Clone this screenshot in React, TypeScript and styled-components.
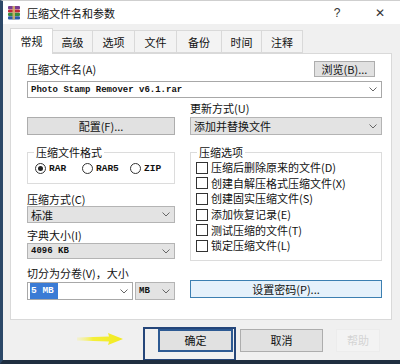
import React from "react";
import styled, { createGlobalStyle } from "styled-components";

const Global = createGlobalStyle`
  html, body { margin: 0; padding: 0; background: #ffffff; }
  body { font-family: "Noto Sans CJK SC", "Noto Sans", sans-serif; }
  * { box-sizing: border-box; }
`;

const cjk = `"Noto Sans CJK SC", "Noto Sans", sans-serif`;
const mono = `"Liberation Mono", "DejaVu Sans Mono", monospace`;

const Window = styled.div`
  width: 400px;
  height: 364px;
  overflow: hidden;
  display: flex;
  flex-direction: column;
  background: #f0f0f0;
  border-left: 3px solid #2c4868;
  border-bottom: 4px solid #1f2e40;
  border-top: 1px solid #cfcfcf;
  font-family: ${cjk};
  font-size: 11px;
  color: #111;
`;

const TitleBar = styled.div`
  height: 23px;
  flex: none;
  background: #ffffff;
  display: flex;
  align-items: center;
  padding-left: 4px;
`;

const Title = styled.span`
  margin-left: 6px;
  font-size: 11px;
  line-height: 14px;
  color: #111;
`;

const TitleButton = styled.span<{ $w: number }>`
  width: ${(p) => p.$w}px;
  height: 23px;
  display: flex;
  align-items: center;
  justify-content: center;
  font-family: "Liberation Sans", sans-serif;
  font-size: 12px;
  color: #333;
`;

const TitleSpacer = styled.div`
  flex: 1;
`;

const Body = styled.div`
  padding: 0 8px 0 7px;
  flex: none;
`;

const TabsRow = styled.div`
  margin-top: 4px;
  height: 25px;
  display: flex;
  align-items: flex-end;
  position: relative;
  z-index: 1;
`;

const Tab = styled.div<{ $w: number; $active?: boolean }>`
  width: ${(p) => p.$w}px;
  height: ${(p) => (p.$active ? 26 : 23)}px;
  margin-bottom: ${(p) => (p.$active ? -1 : 0)}px;
  background: ${(p) => (p.$active ? "#ffffff" : "#f3f3f3")};
  border: 1px solid #d9d9d9;
  border-bottom: ${(p) => (p.$active ? "none" : "1px solid #d9d9d9")};
  border-left: ${(p) => (p.$active ? "1px solid #d9d9d9" : "none")};
  display: flex;
  align-items: center;
  justify-content: center;
  font-size: 11px;
  line-height: 14px;
  padding-bottom: ${(p) => (p.$active ? 2 : 0)}px;
`;

const Panel = styled.div`
  height: 267px;
  background: #ffffff;
  border: 1px solid #d9d9d9;
  padding: 7px 9px 0 16px;
  display: flex;
  flex-direction: column;
`;

const HeaderRow = styled.div`
  height: 16px;
  display: flex;
  align-items: center;
  justify-content: space-between;
`;

const Label = styled.div<{ $mt?: number }>`
  font-size: 11px;
  line-height: 13px;
  height: 13px;
  margin-top: ${(p) => p.$mt ?? 0}px;
  white-space: nowrap;
`;

const Button = styled.div<{ $w?: number; $h: number; $mr?: number }>`
  width: ${(p) => (p.$w ? `${p.$w}px` : "auto")};
  height: ${(p) => p.$h}px;
  margin-right: ${(p) => p.$mr ?? 0}px;
  background: #e1e1e1;
  border: 1px solid #adadad;
  display: flex;
  align-items: center;
  justify-content: center;
  font-size: 11px;
  line-height: 13px;
  white-space: nowrap;
`;

const PasswordButton = styled(Button)`
  margin-top: 19px;
  background: #e5f1fb;
  border: 1px solid #3c7fb1;
`;

const Combo = styled.div<{ $h: number; $mt?: number; $gray?: boolean; $w?: number }>`
  height: ${(p) => p.$h}px;
  width: ${(p) => (p.$w ? `${p.$w}px` : "auto")};
  margin-top: ${(p) => p.$mt ?? 0}px;
  background: ${(p) => (p.$gray ? "#e3e3e3" : "#ffffff")};
  border: 1px solid ${(p) => (p.$gray ? "#b4b4b4" : "#a8a8a8")};
  display: flex;
  align-items: center;
  padding: 0 4px 0 3px;
  font-size: 11px;
  line-height: 14px;
  white-space: nowrap;
`;

const ComboText = styled.span<{ $mono?: boolean }>`
  flex: 1;
  font-family: ${(p) => (p.$mono ? mono : cjk)};
  font-size: ${(p) => (p.$mono ? "9px" : "11px")};
  font-weight: ${(p) => (p.$mono ? 700 : 400)};
  line-height: 14px;
`;

const Selected = styled.span`
  background: #3a7bd5;
  color: #ffffff;
  font-family: ${mono};
  font-size: 9.5px;
  font-weight: 700;
  padding: 1px 4px 1px 1px;
  margin-left: -1px;
`;

const InputSpacer = styled.span`
  flex: 1;
`;

const TwoCols = styled.div<{ $mt: number }>`
  margin-top: ${(p) => p.$mt}px;
  display: grid;
  grid-template-columns: 148px 192px;
  column-gap: 15px;
`;

const Col = styled.div`
  display: flex;
  flex-direction: column;
`;

const ConfigButton = styled(Button)`
  align-self: end;
`;

const Group = styled.fieldset<{ $h: number }>`
  margin: 0;
  height: ${(p) => p.$h}px;
  border: 1px solid #dcdcdc;
  padding: 0 4px 0 6px;
`;

const Legend = styled.legend`
  padding: 0 2px;
  margin-left: 0;
  font-size: 11px;
  line-height: 13px;
`;

const RadioRow = styled.div`
  display: flex;
  align-items: center;
  height: 15px;
  margin-top: 2px;
  padding-left: 1px;
`;

const RadioItem = styled.div<{ $w: number }>`
  width: ${(p) => p.$w}px;
  display: flex;
  align-items: center;
  gap: 3px;
`;

const RadioCircle = styled.span<{ $on?: boolean }>`
  width: 11px;
  height: 11px;
  border-radius: 50%;
  border: 1px solid #333;
  background: #fff;
  display: flex;
  align-items: center;
  justify-content: center;
  &::after {
    content: "";
    width: 5px;
    height: 5px;
    border-radius: 50%;
    background: ${(p) => (p.$on ? "#222" : "transparent")};
  }
`;

const MonoText = styled.span`
  font-family: ${mono};
  font-size: 9.5px;
  font-weight: 700;
`;

const CheckRow = styled.div`
  height: 15.6px;
  display: flex;
  align-items: center;
  gap: 3px;
  font-size: 11px;
  line-height: 13px;
  white-space: nowrap;
`;

const CheckBox = styled.span`
  width: 12px;
  height: 12px;
  border: 1px solid #333;
  background: #fff;
  flex: none;
`;

const CheckList = styled.div`
  margin-top: 1px;
  margin-left: -1px;
`;

const SplitRow = styled.div`
  margin-top: 2px;
  display: flex;
  gap: 2px;
`;

const Footer = styled.div`
  flex: none;
  display: flex;
  align-items: flex-start;
  padding-top: 7px;
  height: 40px;
`;

const ArrowWrap = styled.div`
  margin-left: 72px;
  margin-top: 5px;
  width: 50px;
  height: 14px;
`;

const Highlight = styled.div`
  margin-left: 18px;
  width: 93px;
  height: 34px;
  border: 2px solid #25467a;
  padding: 0 1px 0 13px;
`;

const FooterButton = styled.div<{ $w: number; $ml?: number; $default?: boolean; $faded?: boolean }>`
  width: ${(p) => p.$w}px;
  height: 23px;
  margin-left: ${(p) => p.$ml ?? 0}px;
  margin-top: ${(p) => (p.$default ? 0 : 2)}px;
  background: ${(p) => (p.$faded ? "#f3f3f3" : "#e1e1e1")};
  border: ${(p) =>
    p.$default ? "2px solid #2d5a93" : p.$faded ? "1px solid #ececec" : "1px solid #adadad"};
  color: ${(p) => (p.$faded ? "#d4d4d4" : "#111")};
  display: flex;
  align-items: center;
  justify-content: center;
  font-size: 11px;
  line-height: 13px;
`;

const Chevron = () => (
  <svg width="8" height="5" viewBox="0 0 8 5">
    <path d="M0.5 0.5 L4 4 L7.5 0.5" fill="none" stroke="#666" strokeWidth="1" />
  </svg>
);

const RarIcon = () => (
  <svg width="14" height="15" viewBox="0 0 14 15">
    <rect x="1" y="1" width="12" height="3.2" rx="1" fill="#7a3d8f" />
    <rect x="1" y="4.4" width="12" height="3.2" rx="1" fill="#c0283a" />
    <rect x="1" y="7.8" width="12" height="3.2" rx="1" fill="#3a8a3e" />
    <rect x="1" y="11.2" width="12" height="3.2" rx="1" fill="#2c5aa8" />
    <rect x="5.5" y="1" width="2.5" height="13.4" fill="#d9b66a" opacity="0.85" />
  </svg>
);

const YellowArrow = () => (
  <svg width="50" height="14" viewBox="0 0 50 14">
    <defs>
      <linearGradient id="ya" x1="0" x2="1" y1="0" y2="0">
        <stop offset="0" stopColor="#f7f28a" stopOpacity="0.3" />
        <stop offset="0.35" stopColor="#f4ef3a" />
        <stop offset="1" stopColor="#f2ea20" />
      </linearGradient>
    </defs>
    <path d="M2 5.5 L34 4.6 L33 1 L48 7 L33 13 L34 9.4 L2 8.5 Z" fill="url(#ya)" />
  </svg>
);

const tabs: [string, number][] = [
  ["常规", 43],
  ["高级", 40],
  ["选项", 42],
  ["文件", 42],
  ["备份", 45],
  ["时间", 40],
  ["注释", 41],
];

const options = [
  "压缩后删除原来的文件(D)",
  "创建自解压格式压缩文件(X)",
  "创建固实压缩文件(S)",
  "添加恢复记录(E)",
  "测试压缩的文件(T)",
  "锁定压缩文件(L)",
];

export default function App() {
  return (
    <>
      <Global />
      <Window>
        <TitleBar>
          <RarIcon />
          <Title>压缩文件名和参数</Title>
          <TitleSpacer />
          <TitleButton $w={30}>?</TitleButton>
          <TitleButton $w={8} />
          <TitleButton $w={40}>✕</TitleButton>
        </TitleBar>
        <Body>
          <TabsRow>
            {tabs.map(([t, w], i) => (
              <Tab key={t} $w={w} $active={i === 0}>
                {t}
              </Tab>
            ))}
          </TabsRow>
          <Panel>
            <HeaderRow>
              <Label>压缩文件名(A)</Label>
              <Button $w={61} $h={16} $mr={7}>
                浏览(B)...
              </Button>
            </HeaderRow>
            <Combo $h={17} $mt={4}>
              <ComboText $mono>Photo Stamp Remover v6.1.rar</ComboText>
              <Chevron />
            </Combo>
            <TwoCols $mt={4}>
              <ConfigButton $h={18}>配置(F)...</ConfigButton>
              <Col>
                <Label>更新方式(U)</Label>
                <Combo $h={18} $mt={2} $gray>
                  <ComboText>添加并替换文件</ComboText>
                  <Chevron />
                </Combo>
              </Col>
            </TwoCols>
            <TwoCols $mt={11}>
              <Col>
                <Group $h={38}>
                  <Legend>压缩文件格式</Legend>
                  <RadioRow>
                    <RadioItem $w={47}>
                      <RadioCircle $on />
                      <MonoText>RAR</MonoText>
                    </RadioItem>
                    <RadioItem $w={48}>
                      <RadioCircle />
                      <MonoText>RAR5</MonoText>
                    </RadioItem>
                    <RadioItem $w={40}>
                      <RadioCircle />
                      <MonoText>ZIP</MonoText>
                    </RadioItem>
                  </RadioRow>
                </Group>
                <Label $mt={9}>压缩方式(C)</Label>
                <Combo $h={17} $gray>
                  <ComboText>标准</ComboText>
                  <Chevron />
                </Combo>
                <Label $mt={6}>字典大小(I)</Label>
                <Combo $h={16} $mt={1} $gray>
                  <ComboText $mono>4096 KB</ComboText>
                  <Chevron />
                </Combo>
                <Label $mt={8}>切分为分卷(V)，大小</Label>
                <SplitRow>
                  <Combo $h={18} $w={106}>
                    <Selected>5 MB</Selected>
                    <InputSpacer />
                    <Chevron />
                  </Combo>
                  <Combo $h={18} $w={40} $gray>
                    <ComboText $mono>MB</ComboText>
                    <Chevron />
                  </Combo>
                </SplitRow>
              </Col>
              <Col>
                <Group $h={115}>
                  <Legend>压缩选项</Legend>
                  <CheckList>
                    {options.map((o) => (
                      <CheckRow key={o}>
                        <CheckBox />
                        {o}
                      </CheckRow>
                    ))}
                  </CheckList>
                </Group>
                <PasswordButton $h={18}>设置密码(P)...</PasswordButton>
              </Col>
            </TwoCols>
          </Panel>
        </Body>
        <Footer>
          <ArrowWrap>
            <YellowArrow />
          </ArrowWrap>
          <Highlight>
            <FooterButton $w={75} $default>
              确定
            </FooterButton>
          </Highlight>
          <FooterButton $w={83} $ml={4}>
            取消
          </FooterButton>
          <FooterButton $w={44} $ml={13} $faded>
            帮助
          </FooterButton>
        </Footer>
      </Window>
    </>
  );
}
